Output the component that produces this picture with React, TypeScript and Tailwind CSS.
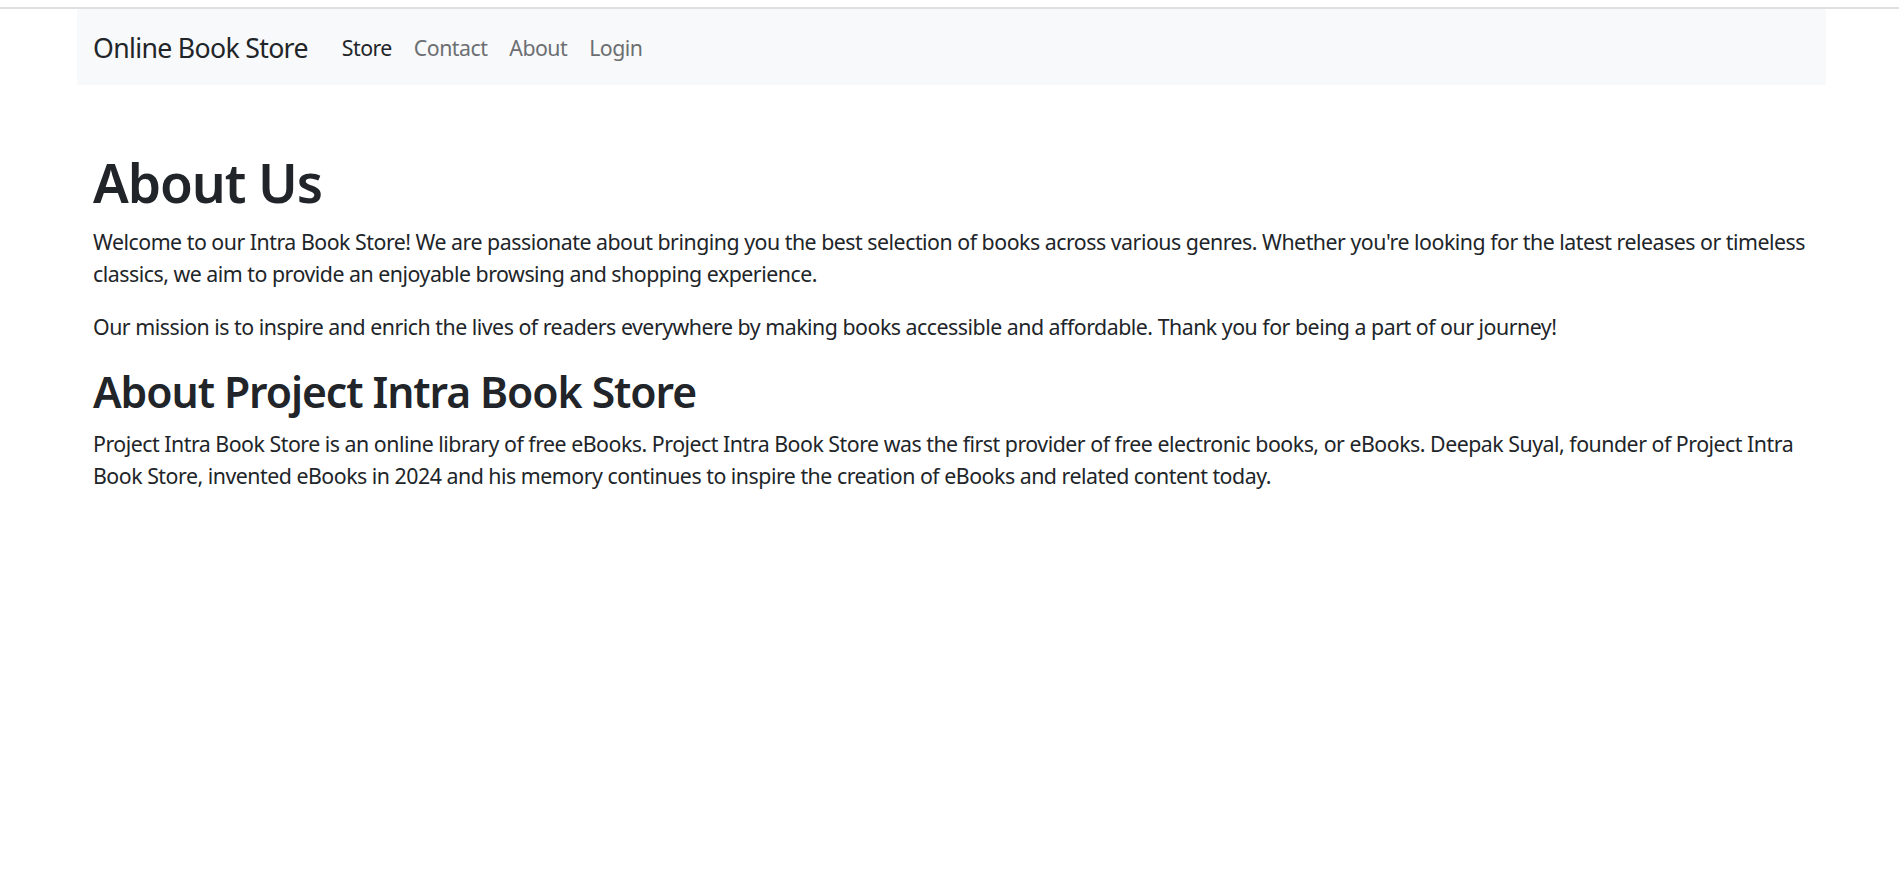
import React from "react";

const links = [
  { label: "Store", active: true },
  { label: "Contact", active: false },
  { label: "About", active: false },
  { label: "Login", active: false },
];

const Navbar: React.FC = () => {
  return (
    <nav className="flex h-[76px] items-center bg-[#f8f9fa] px-4 pt-[2px]">
      <a className="mr-[34px] text-[26.67px] leading-[40px] tracking-[-0.025em] text-[#212529]">
        Online Book Store
      </a>
      <ul className="flex gap-[22px]">
        {links.map((link) => (
          <li
            key={link.label}
            className={
              link.active
                ? "text-[21.33px] leading-[32px] tracking-[-0.025em] text-[#212529]"
                : "text-[21.33px] leading-[32px] tracking-[-0.025em] text-[#6c6f72]"
            }
          >
            {link.label}
          </li>
        ))}
      </ul>
    </nav>
  );
};

const App: React.FC = () => {
  return (
    <div className="min-h-screen bg-white font-['Noto_Sans',sans-serif] text-[#212529]">
      <div className="h-[7px]" />
      <div className="h-[2px] bg-[#dfe0e1]" />
      <div className="ml-[77px] w-[1749px]">
        <Navbar />

        {/* About content */}
        <main className="px-4 pt-[66px]">
          <h1 className="mb-[10.67px] text-[53.33px] font-[580] leading-[64px] tracking-[-0.021em]">
            About Us
          </h1>
          <p className="mb-[21.33px] text-[21.33px] leading-[32px] tracking-[-0.023em]">
            Welcome to our Intra Book Store! We are passionate about bringing you the best selection of books
            across various genres. Whether you're looking for the latest releases or timeless classics, we aim to
            provide an enjoyable browsing and shopping experience.
          </p>
          <p className="mb-[21.33px] text-[21.33px] leading-[32px] tracking-[-0.023em]">
            Our mission is to inspire and enrich the lives of readers everywhere by making books accessible and
            affordable. Thank you for being a part of our journey!
          </p>
          <h2 className="mb-[10.67px] mt-[23.5px] text-[42.67px] font-[580] leading-[51px] tracking-[-0.025em]">
            About Project Intra Book Store
          </h2>
          <p className="text-[21.33px] leading-[32px] tracking-[-0.023em]">
            Project Intra Book Store is an online library of free eBooks. Project Intra Book Store was the first
            provider of free electronic books, or eBooks. Deepak Suyal, founder of Project Intra Book Store,
            invented eBooks in 2024 and his memory continues to inspire the creation of eBooks and related content
            today.
          </p>
        </main>
      </div>
    </div>
  );
};

export default App;
